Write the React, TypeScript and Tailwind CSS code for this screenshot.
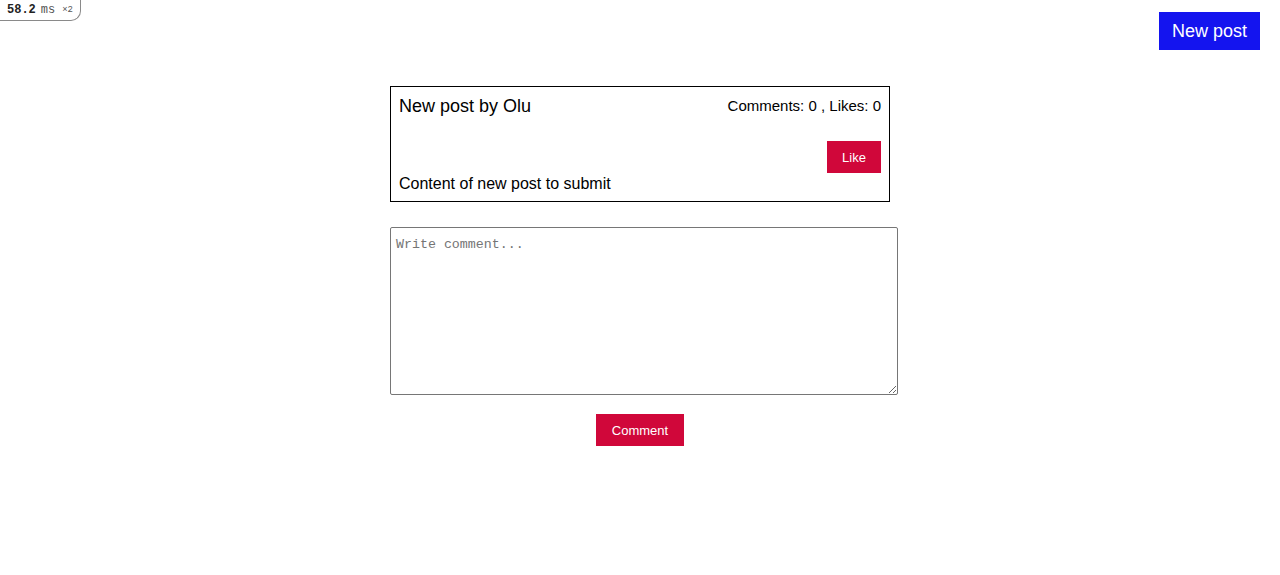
import { useState } from "react";

export default function App() {
	const [comment, setComment] = useState("");

	return (
		<main className="relative min-h-[575px] w-full bg-white font-['Liberation_Sans',Arial,sans-serif] text-black">
			{/* render time badge */}
			<div className="absolute left-0 top-0 flex h-[21px] w-[81px] items-center gap-[5px] rounded-br-[10px] border-b border-r border-[#8a8a8a] bg-white pl-[7px] font-['Liberation_Mono',monospace] text-[12px] leading-none">
				<span className="font-bold text-[#222]">58.2</span>
				<span className="text-[#555]">ms</span>
				<span className="ml-[2px] text-[9px] text-[#555]">×2</span>
			</div>

			<div className="flex justify-end px-5 pt-3">
				<button
					type="button"
					className="h-[38px] w-[101px] bg-[#1414ef] pt-[1px] text-[18px] text-white"
				>
					New post
				</button>
			</div>

			<div className="mx-auto mt-9 flex w-[500px] flex-col">
				{/* Post */}
				<div className="border border-black px-2 pb-[7px] pt-2">
					<div className="flex items-start justify-between">
						<span className="text-[18px] leading-[22px]">New post by Olu</span>
						<span className="text-[15px] leading-[22px]">
							Comments: 0 , Likes: 0
						</span>
					</div>
					<div className="mt-6 flex justify-end">
						<button
							type="button"
							className="h-8 w-[54px] bg-[#d0073a] pt-[1px] text-[13px] text-white"
						>
							Like
						</button>
					</div>
					<p className="mt-[1px] text-[16px] leading-[20px]">
						Content of new post to submit
					</p>
				</div>

				{/* Comment form */}
				<textarea
					value={comment}
					onChange={(e) => setComment(e.target.value)}
					placeholder="Write comment..."
					className="mt-[25px] h-[168px] w-[508px] rounded-[2px] border border-[#767676] px-[5px] pb-1 pt-[7px] font-['Liberation_Mono',monospace] text-[13.3px] placeholder-[#757575] outline-none"
				/>
				<div className="mt-[19px] flex justify-center">
					<button
						type="button"
						className="h-8 w-[88px] bg-[#d0073a] pt-[1px] text-[13px] text-white"
					>
						Comment
					</button>
				</div>
			</div>
		</main>
	);
}
